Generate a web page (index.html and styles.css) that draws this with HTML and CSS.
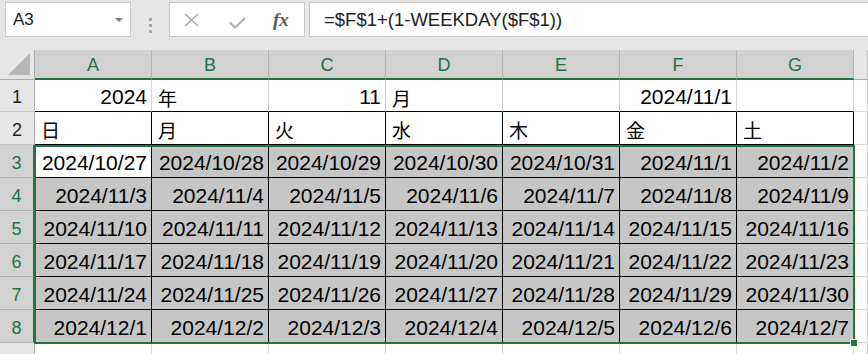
FILE: index.html
```html
<!DOCTYPE html>
<html>
<head>
    <title>Calendar Sheet</title>
    <link rel="stylesheet" href="styles.css">
</head>
<body>
    <div class="toolbar">
        <div class="namebox"><span>A3</span><span class="caret"></span></div>
        <div class="grip"><i></i><i></i><i></i></div>
        <div class="fx-tools">
            <svg class="ico-x" width="15" height="14" viewBox="0 0 15 14"><path d="M1 1 L14 13 M14 1 L1 13" stroke="#a6a6a6" stroke-width="1.6" fill="none"/></svg>
            <svg class="ico-ok" width="17" height="12" viewBox="0 0 17 12"><path d="M1 5.5 L6 10.5 L16 1" stroke="#b4b4b4" stroke-width="2.4" fill="none"/></svg>
            <span class="fx">fx</span>
        </div>
        <div class="formula">=$F$1+(1-WEEKDAY($F$1))</div>
    </div>

    <div class="sheet">
        <!-- column headers -->
        <div class="corner"><span class="tri"></span></div>
        <div class="hd on">A</div>
        <div class="hd on">B</div>
        <div class="hd on">C</div>
        <div class="hd on">D</div>
        <div class="hd on">E</div>
        <div class="hd on">F</div>
        <div class="hd on">G</div>
        <div class="hd"></div>

        <!-- row 1 -->
        <div class="rh">1</div>
        <div class="cell top num">2024</div>
        <div class="cell top kanji">年</div>
        <div class="cell top num">11</div>
        <div class="cell top kanji">月</div>
        <div class="cell top"></div>
        <div class="cell top num">2024/11/1</div>
        <div class="cell top"></div>
        <div class="cell"></div>

        <!-- row 2 -->
        <div class="rh">2</div>
        <div class="cell ruled kanji">日</div>
        <div class="cell ruled kanji">月</div>
        <div class="cell ruled kanji">火</div>
        <div class="cell ruled kanji">水</div>
        <div class="cell ruled kanji">木</div>
        <div class="cell ruled kanji">金</div>
        <div class="cell ruled kanji">土</div>
        <div class="cell"></div>

        <!-- row 3 -->
        <div class="rh on">3</div>
        <div class="cell ruled num">2024/10/27</div>
        <div class="cell ruled num sel">2024/10/28</div>
        <div class="cell ruled num sel">2024/10/29</div>
        <div class="cell ruled num sel">2024/10/30</div>
        <div class="cell ruled num sel">2024/10/31</div>
        <div class="cell ruled num sel">2024/11/1</div>
        <div class="cell ruled num sel">2024/11/2</div>
        <div class="cell"></div>

        <!-- row 4 -->
        <div class="rh on">4</div>
        <div class="cell ruled num sel">2024/11/3</div>
        <div class="cell ruled num sel">2024/11/4</div>
        <div class="cell ruled num sel">2024/11/5</div>
        <div class="cell ruled num sel">2024/11/6</div>
        <div class="cell ruled num sel">2024/11/7</div>
        <div class="cell ruled num sel">2024/11/8</div>
        <div class="cell ruled num sel">2024/11/9</div>
        <div class="cell"></div>

        <!-- row 5 -->
        <div class="rh on">5</div>
        <div class="cell ruled num sel">2024/11/10</div>
        <div class="cell ruled num sel">2024/11/11</div>
        <div class="cell ruled num sel">2024/11/12</div>
        <div class="cell ruled num sel">2024/11/13</div>
        <div class="cell ruled num sel">2024/11/14</div>
        <div class="cell ruled num sel">2024/11/15</div>
        <div class="cell ruled num sel">2024/11/16</div>
        <div class="cell"></div>

        <!-- row 6 -->
        <div class="rh on">6</div>
        <div class="cell ruled num sel">2024/11/17</div>
        <div class="cell ruled num sel">2024/11/18</div>
        <div class="cell ruled num sel">2024/11/19</div>
        <div class="cell ruled num sel">2024/11/20</div>
        <div class="cell ruled num sel">2024/11/21</div>
        <div class="cell ruled num sel">2024/11/22</div>
        <div class="cell ruled num sel">2024/11/23</div>
        <div class="cell"></div>

        <!-- row 7 -->
        <div class="rh on">7</div>
        <div class="cell ruled num sel">2024/11/24</div>
        <div class="cell ruled num sel">2024/11/25</div>
        <div class="cell ruled num sel">2024/11/26</div>
        <div class="cell ruled num sel">2024/11/27</div>
        <div class="cell ruled num sel">2024/11/28</div>
        <div class="cell ruled num sel">2024/11/29</div>
        <div class="cell ruled num sel">2024/11/30</div>
        <div class="cell"></div>

        <!-- row 8 -->
        <div class="rh on">8</div>
        <div class="cell ruled num sel">2024/12/1</div>
        <div class="cell ruled num sel">2024/12/2</div>
        <div class="cell ruled num sel">2024/12/3</div>
        <div class="cell ruled num sel">2024/12/4</div>
        <div class="cell ruled num sel">2024/12/5</div>
        <div class="cell ruled num sel">2024/12/6</div>
        <div class="cell ruled num sel">2024/12/7</div>
        <div class="cell"></div>

        <!-- row 9, cut off by the window -->
        <div class="rh">9</div>
        <div class="cell"></div>
        <div class="cell"></div>
        <div class="cell"></div>
        <div class="cell"></div>
        <div class="cell"></div>
        <div class="cell"></div>
        <div class="cell"></div>
        <div class="cell"></div>

        <!-- selection frame A3:G8 -->
        <div class="selection"><span class="handle"></span></div>
    </div>
</body>
</html>
```

FILE: styles.css
```css
body {
    margin: 0;
    height: 354px;
    overflow: hidden;
    background-color: #e6e6e6;
    font-family: "Liberation Sans", "Noto Sans CJK JP", sans-serif;
}

/* formula bar */
.toolbar {
    display: flex;
    height: 50px;
    padding-top: 2px;
    box-sizing: border-box;
}
.namebox {
    margin-left: 5px;
    width: 126px;
    height: 35px;
    box-sizing: border-box;
    background: #fff;
    border: 1px solid #c6c6c6;
    display: flex;
    align-items: center;
    justify-content: space-between;
    padding: 0 7px 0 7px;
    font-size: 17px;
    color: #222;
}
.caret {
    border-left: 4px solid transparent;
    border-right: 4px solid transparent;
    border-top: 4px solid #7a7a7a;
}
.grip {
    width: 38px;
    display: flex;
    flex-direction: column;
    align-items: center;
    justify-content: center;
    gap: 3px;
    padding-bottom: 2px;
}
.grip i {
    width: 3px;
    height: 3px;
    background: #a8a8a8;
}
.fx-tools {
    width: 136px;
    height: 35px;
    box-sizing: border-box;
    background: #fff;
    border: 1px solid #c6c6c6;
    display: flex;
    align-items: center;
    padding-left: 14px;
}
.ico-x {
    margin-top: 1px;
}
.ico-ok {
    margin-left: 30px;
    margin-top: 6px;
}
.fx {
    margin-left: 27px;
    font-family: "Liberation Serif", serif;
    font-style: italic;
    font-weight: bold;
    font-size: 19px;
    color: #5a5a5a;
}
.formula {
    flex: 1;
    margin-left: 4px;
    height: 35px;
    box-sizing: border-box;
    background: #fff;
    border: 1px solid #c6c6c6;
    border-right: none;
    padding-left: 14px;
    font-size: 18.5px;
    line-height: 33px;
    color: #222;
}

/* grid */
.sheet {
    position: relative;
    display: grid;
    grid-template-columns: 35px repeat(7, 117px) 1fr;
    grid-template-rows: 30px 32px 33px repeat(6, 33px) 33px;
    background: #fff;
}
.corner {
    position: relative;
    background: #e6e6e6;
    border-right: 1px solid #ababab;
    border-bottom: 1px solid #ababab;
}
.tri {
    position: absolute;
    right: 4px;
    bottom: 4px;
    border-left: 22px solid transparent;
    border-bottom: 22px solid #b7b7b7;
}
.hd {
    background: #e6e6e6;
    border-right: 1px solid #bdbdbd;
    border-bottom: 1px solid #ababab;
    display: flex;
    align-items: center;
    justify-content: center;
    font-size: 18px;
    color: #444;
    padding-top: 2px;
}
.hd.on {
    background: #d2d2d2;
    color: #217346;
    border-right-color: #b4b4b4;
    border-bottom: 2px solid #217346;
}
.rh {
    background: #e6e6e6;
    border-right: 1px solid #ababab;
    border-bottom: 1px solid #c4c4c4;
    display: flex;
    align-items: center;
    justify-content: center;
    font-size: 18px;
    color: #222;
    padding-top: 4px;
    box-sizing: border-box;
}
.rh.on {
    background: #d2d2d2;
    color: #217346;
    border-right: 2px solid #217346;
    border-bottom-color: #b4b4b4;
}

.cell {
    box-sizing: border-box;
    border-right: 1px solid #d4d4d4;
    border-bottom: 1px solid #d4d4d4;
    display: flex;
    align-items: center;
    padding: 3px 4px 0 6px;
    font-size: 21px;
    color: #000;
    white-space: nowrap;
    overflow: hidden;
}
.cell.top {
    border-bottom-color: #000;
}
.cell.ruled {
    border-right-color: #000;
    border-bottom-color: #000;
}
.cell.num {
    justify-content: flex-end;
}
.cell.kanji {
    font-size: 19px;
}
.cell.sel {
    background: #c6c6c6;
}

.selection {
    position: absolute;
    left: 34px;
    top: 95px;
    width: 821px;
    height: 199px;
    box-sizing: border-box;
    border: 2px solid #217346;
}
.handle {
    position: absolute;
    right: -5px;
    bottom: -5px;
    width: 6px;
    height: 6px;
    background: #217346;
    border: 1px solid #fff;
}
```
